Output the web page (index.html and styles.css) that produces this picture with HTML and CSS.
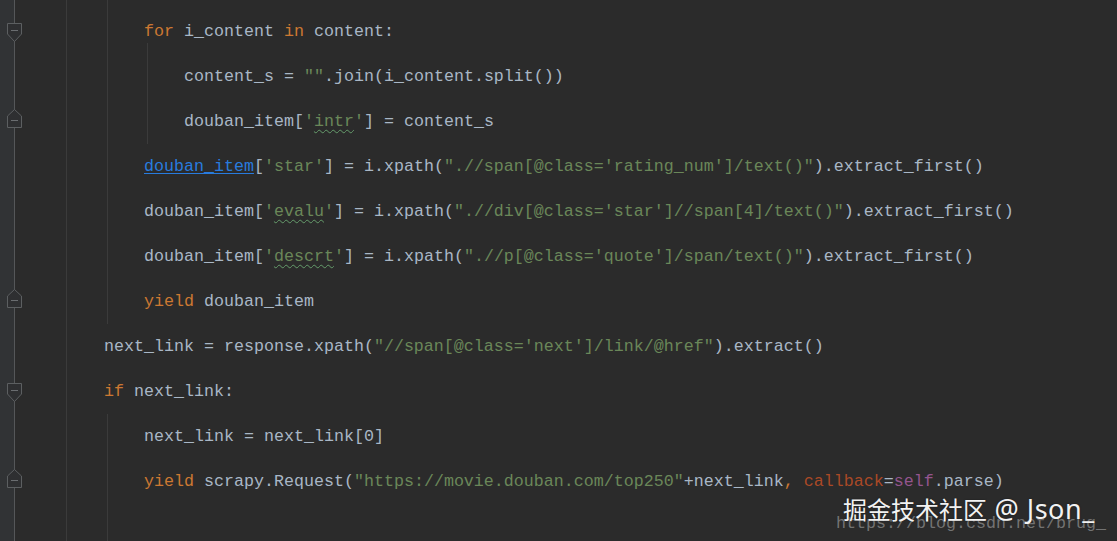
FILE: index.html
```html
<!DOCTYPE html>
<html>
<head>
<meta charset="utf-8">
<link rel="stylesheet" href="styles.css">
</head>
<body>
<div class="editor">
  <div class="gutter">
    <div class="g-row"><svg class="fold start" width="17" height="20" viewBox="0 0 17 20"><path d="M1.5 0.5 H15.5 V11 L8.5 18.5 L1.5 11 Z" /><path class="minus" d="M5 7.5 H12" /></svg></div>
    <div class="g-row"></div>
    <div class="g-row"><svg class="fold end" width="17" height="20" viewBox="0 0 17 20"><path d="M8.5 0.5 L15.5 7 V18.5 H1.5 V7 Z" /><path class="minus" d="M5 11.5 H12" /></svg></div>
    <div class="g-row"></div>
    <div class="g-row"></div>
    <div class="g-row"></div>
    <div class="g-row"><svg class="fold end" width="17" height="20" viewBox="0 0 17 20"><path d="M8.5 0.5 L15.5 7 V18.5 H1.5 V7 Z" /><path class="minus" d="M5 11.5 H12" /></svg></div>
    <div class="g-row"></div>
    <div class="g-row"><svg class="fold start" width="17" height="20" viewBox="0 0 17 20"><path d="M1.5 0.5 H15.5 V11 L8.5 18.5 L1.5 11 Z" /><path class="minus" d="M5 7.5 H12" /></svg></div>
    <div class="g-row"></div>
    <div class="g-row"><svg class="fold end" width="17" height="20" viewBox="0 0 17 20"><path d="M8.5 0.5 L15.5 7 V18.5 H1.5 V7 Z" /><path class="minus" d="M5 11.5 H12" /></svg></div>
  </div>
  <div class="code">
    <div class="block top">
      <div class="row"><span class="k">for</span> i_content <span class="k">in</span> content:</div>
      <div class="block inner">
        <div class="row">content_s = <span class="s">""</span>.join(i_content.split())</div>
        <div class="row">douban_item[<span class="s">'<span class="typo">intr</span>'</span>] = content_s</div>
      </div>
      <div class="row"><span class="link">douban_item</span>[<span class="s">'star'</span>] = i.xpath(<span class="s">".//span[@class='rating_num']/text()"</span>).extract_first()</div>
      <div class="row">douban_item[<span class="s">'<span class="typo">evalu</span>'</span>] = i.xpath(<span class="s">".//div[@class='star']//span[4]/text()"</span>).extract_first()</div>
      <div class="row">douban_item[<span class="s">'<span class="typo">descrt</span>'</span>] = i.xpath(<span class="s">".//p[@class='quote']/span/text()"</span>).extract_first()</div>
      <div class="row"><span class="k">yield</span> douban_item</div>
    </div>
    <div class="row">next_link = response.xpath(<span class="s">"//span[@class='next']/link/@href"</span>).extract()</div>
    <div class="row"><span class="k">if</span> next_link:</div>
    <div class="block tail">
      <div class="row">next_link = next_link[0]</div>
      <div class="row"><span class="k">yield</span> scrapy.Request(<span class="s">"https://movie.douban.com/top250"</span>+next_link<span class="k">,</span> <span class="arg">callback</span>=<span class="self">self</span>.parse)</div>
    </div>
  </div>
  <div class="wm-url">https://blog.csdn.net/brug_</div>
  <div class="wm">掘金技术社区<span class="wm-latin"> @ Json_</span></div>
</div>
</body>
</html>
```
FILE: styles.css
```css
html, body {
  margin: 0;
  background: #2b2b2b;
  overflow: hidden;
}

.editor {
  display: flex;
  height: 541px;
  position: relative;
  overflow: hidden;
  font-family: "Liberation Mono", monospace;
}

.gutter {
  width: 66px;
  flex: none;
  box-sizing: border-box;
  padding-top: 9px;
  background:
    linear-gradient(to right, transparent 14px, #555759 14px, #555759 15px, transparent 15px),
    linear-gradient(to right, #313335 15px, #2b2b2b 15px);
}

.g-row {
  height: 45px;
  display: flex;
  align-items: flex-start;
}

.fold {
  display: block;
  flex: none;
  margin-left: 6px;
}

.fold path {
  fill: #2e2f31;
  stroke: #5c5f61;
  stroke-width: 1;
}

.fold path.minus {
  fill: none;
  stroke: #6a6d70;
}

.fold.start {
  margin-top: 14px;
}

.fold.end {
  margin-top: 10px;
}

.code {
  flex: 1;
  border-left: 1px solid #3b3b3b;
  padding-left: 37px;
  padding-top: 9px;
  font-size: 16.67px;
  color: #a9b7c6;
}

.row {
  height: 45px;
  line-height: 45px;
  white-space: pre;
}

.block {
  margin-left: 3px;
  border-left: 1px solid #3b3b3b;
  padding-left: 36px;
}

.block.top {
  margin-top: -9px;
  padding-top: 9px;
}

.block.inner {
  margin-top: -11px;
  padding-top: 11px;
}

.block.tail {
  padding-bottom: 60px;
}

.k {
  color: #cc7832;
}

.s {
  color: #6a8759;
}

.typo {
  text-decoration: underline wavy #659c6b;
  text-decoration-thickness: 1px;
  text-underline-offset: 3px;
}

.link {
  color: #287bde;
  text-decoration: underline;
  text-underline-offset: 2px;
}

.arg {
  color: #aa4926;
}

.self {
  color: #94558d;
}

.wm-url {
  position: absolute;
  left: 836px;
  top: 514px;
  font-family: "Liberation Mono", monospace;
  font-size: 16.67px;
  color: rgba(165, 165, 165, 0.6);
  white-space: pre;
}

.wm {
  position: absolute;
  left: 843px;
  top: 490px;
  font-family: "Noto Sans CJK SC", sans-serif;
  font-size: 24px;
  color: #f2f2f2;
  white-space: pre;
  text-shadow: 0 0 2px rgba(0, 0, 0, 0.4);
}

.wm-latin {
  font-family: "Noto Sans", sans-serif;
  font-size: 27px;
  letter-spacing: 0.5px;
}
```
